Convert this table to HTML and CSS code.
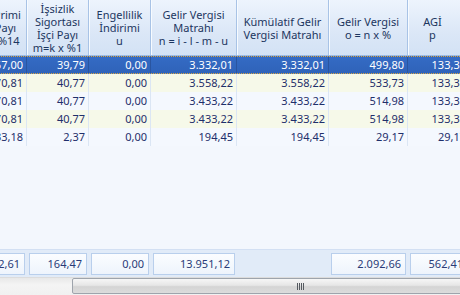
FILE: index.html
```html
<!DOCTYPE html>
<html lang="tr">
<head>
<meta charset="utf-8">
<link rel="stylesheet" href="styles.css">
</head>
<body>
<div class="grid">
  <div class="viewport">
    <div class="sheet">
      <div class="row head">
        <div class="hc">SGK Primi<br>İşçi Payı<br>l=k x %14</div>
        <div class="hc">İşsizlik<br>Sigortası<br>İşçi Payı<br>m=k x %1</div>
        <div class="hc">Engellilik<br>İndirimi<br>u</div>
        <div class="hc">Gelir Vergisi<br>Matrahı<br>n = i - l - m - u</div>
        <div class="hc">Kümülatif Gelir<br>Vergisi Matrahı</div>
        <div class="hc">Gelir Vergisi<br>o = n x %</div>
        <div class="hc last">AGİ<br>p</div>
      </div>
      <div class="row data sel">
        <div class="c">567,00</div><div class="c">39,79</div><div class="c">0,00</div><div class="c">3.332,01</div><div class="c">3.332,01</div><div class="c">499,80</div><div class="c">133,33</div>
      </div>
      <div class="row data odd">
        <div class="c">570,81</div><div class="c">40,77</div><div class="c">0,00</div><div class="c">3.558,22</div><div class="c">3.558,22</div><div class="c">533,73</div><div class="c">133,33</div>
      </div>
      <div class="row data even">
        <div class="c">570,81</div><div class="c">40,77</div><div class="c">0,00</div><div class="c">3.433,22</div><div class="c">3.433,22</div><div class="c">514,98</div><div class="c">133,33</div>
      </div>
      <div class="row data odd">
        <div class="c">570,81</div><div class="c">40,77</div><div class="c">0,00</div><div class="c">3.433,22</div><div class="c">3.433,22</div><div class="c">514,98</div><div class="c">133,33</div>
      </div>
      <div class="row data even">
        <div class="c">33,18</div><div class="c">2,37</div><div class="c">0,00</div><div class="c">194,45</div><div class="c">194,45</div><div class="c">29,17</div><div class="c">29,17</div>
      </div>
    </div>
  </div>
  <div class="footer">
    <div class="sheet">
      <div class="row sums">
        <div class="s"><span class="box">2.312,61</span></div>
        <div class="s"><span class="box">164,47</span></div>
        <div class="s"><span class="box">0,00</span></div>
        <div class="s"><span class="box">13.951,12</span></div>
        <div class="s"></div>
        <div class="s"><span class="box">2.092,66</span></div>
        <div class="s"><span class="box">562,41</span></div>
      </div>
    </div>
  </div>
  <div class="hscroll">
    <div class="thumb"><span class="grip"></span></div>
  </div>
</div>
</body>
</html>
```

FILE: styles.css
```css
html, body {
  margin: 0;
  padding: 0;
  width: 460px;
  height: 295px;
  overflow: hidden;
}
body {
  font-family: "Noto Sans", "Open Sans", "DejaVu Sans", sans-serif;
  font-size: 11px;
  color: #1f2f6b;
  background: #f3f7fd;
}
.grid {
  display: flex;
  flex-direction: column;
  width: 460px;
  height: 295px;
  overflow: hidden;
}
.viewport {
  flex: 1;
  overflow: hidden;
  background: #f3f7fd;
}
.sheet {
  margin-left: -35px;
  width: 505px;
}
.row {
  display: grid;
  grid-template-columns: 62px 62px 62px 86px 92px 79px 62px;
}
.head {
  height: 56px;
  background: linear-gradient(#edf4fd, #dbe7f7 60%, #d3e2f5);
  border-bottom: 1px solid #9dbbe3;
  box-sizing: border-box;
}
.hc {
  display: flex;
  align-items: center;
  justify-content: center;
  text-align: center;
  line-height: 13px;
  color: #1c3660;
  border-right: 1px solid #a8c3e6;
  box-shadow: inset 1px 0 0 #f7fbff;
  white-space: nowrap;
  overflow: hidden;
}
.hc.last {
  padding-right: 12px;
}
.data {
  height: 18px;
  box-sizing: border-box;
}
.c {
  text-align: right;
  padding-right: 3px;
  line-height: 17px;
  border-right: 1px solid #dbe6f4;
  white-space: nowrap;
  overflow: hidden;
}
.odd { background: #f6f9e9; }
.even { background: #f4f8fe; }
.sel {
  background: linear-gradient(#346bc4, #2f63b9);
  color: #ffffff;
  border-top: 1px dotted #d9a441;
  border-bottom: 1px dotted #d9a441;
}
.sel .c {
  line-height: 16px;
  border-right-color: #2a55a0;
}
.footer {
  height: 28px;
  background: #e1ebf8;
  border-top: 1px solid #d3e0f3;
  box-sizing: border-box;
  overflow: hidden;
  padding-top: 3px;
}
.sums {
  height: 22px;
}
.s {
  display: flex;
  padding: 0 2px 0 2px;
}
.box {
  flex: 1;
  height: 22px;
  box-sizing: border-box;
  border: 1px solid #b9cfec;
  background: linear-gradient(#fbfdff, #eef4fc);
  text-align: right;
  padding-right: 4px;
  line-height: 20px;
  color: #2a3c78;
  white-space: nowrap;
  overflow: hidden;
}
.hscroll {
  height: 18px;
  flex-shrink: 0;
  display: flex;
  background: linear-gradient(#e8e8e8, #f4f4f4 40%, #f1f1f1);
  border-top: 1px solid #dcdcdc;
  box-sizing: border-box;
  overflow: hidden;
}
.thumb {
  flex-shrink: 0;
  margin-left: 72px;
  width: 456px;
  height: 16px;
  box-sizing: border-box;
  border: 1px solid #9ea4ac;
  border-radius: 2px;
  background: linear-gradient(#f6f6f6, #e6e6e6 45%, #d4d4d4 55%, #dcdcdc);
  display: flex;
  align-items: center;
  justify-content: center;
}
.grip {
  width: 7px;
  height: 7px;
  background: repeating-linear-gradient(90deg, #555a60 0 1px, transparent 1px 2px);
}
```
